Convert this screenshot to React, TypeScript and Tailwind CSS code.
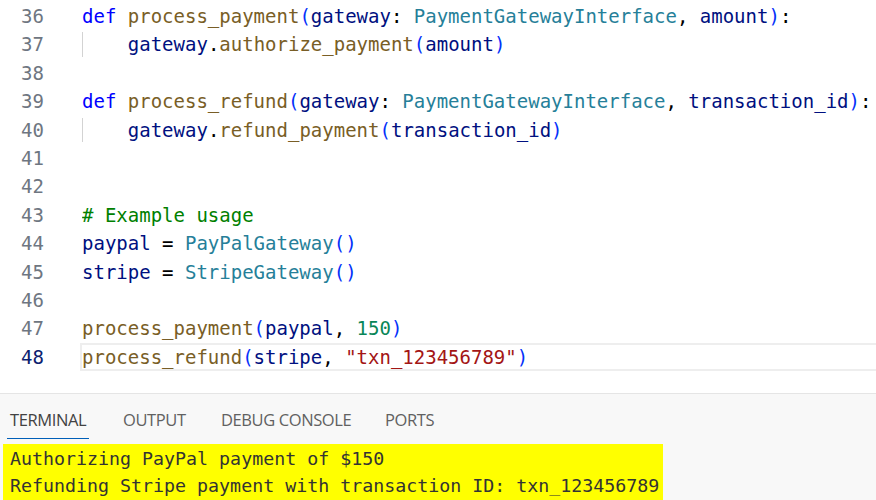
import React from "react";

type Tok = [string, string];

const KW = "text-[#0000ff]";
const FN = "text-[#795e26]";
const VAR = "text-[#001080]";
const TYPE = "text-[#267f99]";
const PAREN = "text-[#0431fa]";
const PLAIN = "text-[#000000]";
const CMT = "text-[#008000]";
const NUM = "text-[#098658]";
const STR = "text-[#a31515]";

// each line: number, indent?, tokens
const lines: { n: number; indent?: boolean; toks: Tok[] }[] = [
  {
    n: 36,
    toks: [
      ["def", KW],
      [" ", PLAIN],
      ["process_payment", FN],
      ["(", PAREN],
      ["gateway", VAR],
      [": ", PLAIN],
      ["PaymentGatewayInterface", TYPE],
      [", ", PLAIN],
      ["amount", VAR],
      [")", PAREN],
      [":", PLAIN],
    ],
  },
  {
    n: 37,
    indent: true,
    toks: [
      ["gateway", VAR],
      [".", PLAIN],
      ["authorize_payment", FN],
      ["(", PAREN],
      ["amount", VAR],
      [")", PAREN],
    ],
  },
  { n: 38, toks: [] },
  {
    n: 39,
    toks: [
      ["def", KW],
      [" ", PLAIN],
      ["process_refund", FN],
      ["(", PAREN],
      ["gateway", VAR],
      [": ", PLAIN],
      ["PaymentGatewayInterface", TYPE],
      [", ", PLAIN],
      ["transaction_id", VAR],
      [")", PAREN],
      [":", PLAIN],
    ],
  },
  {
    n: 40,
    indent: true,
    toks: [
      ["gateway", VAR],
      [".", PLAIN],
      ["refund_payment", FN],
      ["(", PAREN],
      ["transaction_id", VAR],
      [")", PAREN],
    ],
  },
  { n: 41, toks: [] },
  { n: 42, toks: [] },
  { n: 43, toks: [["# Example usage", CMT]] },
  {
    n: 44,
    toks: [
      ["paypal", VAR],
      [" = ", PLAIN],
      ["PayPalGateway", TYPE],
      ["()", PAREN],
    ],
  },
  {
    n: 45,
    toks: [
      ["stripe", VAR],
      [" = ", PLAIN],
      ["StripeGateway", TYPE],
      ["()", PAREN],
    ],
  },
  { n: 46, toks: [] },
  {
    n: 47,
    toks: [
      ["process_payment", FN],
      ["(", PAREN],
      ["paypal", VAR],
      [", ", PLAIN],
      ["150", NUM],
      [")", PAREN],
    ],
  },
  {
    n: 48,
    toks: [
      ["process_refund", FN],
      ["(", PAREN],
      ["stripe", VAR],
      [", ", PLAIN],
      ['"txn_123456789"', STR],
      [")", PAREN],
    ],
  },
];

const CURRENT = 48;

const App = () => {
  return (
    <div className="w-[876px] h-[500px] bg-white overflow-hidden flex flex-col">
      {/* Editor */}
      <div
        className="h-[393px] pt-[2px] text-[19px] whitespace-pre overflow-hidden"
        style={{ fontFamily: '"DejaVu Sans Mono", monospace' }}
      >
        {lines.map((l) => (
          <div key={l.n} className="flex h-[28.4px]">
            <div
              className={`w-[44px] shrink-0 text-right leading-[28.4px] ${
                l.n === CURRENT ? "text-[#0b216f]" : "text-[#6e7681]"
              }`}
            >
              {l.n}
            </div>
            <div
              className={`ml-[36px] flex-1 flex overflow-hidden border-2 border-r-0 ${
                l.n === CURRENT ? "border-[#eeeeee]" : "border-transparent"
              }`}
            >
              {l.indent && (
                <span className="w-[45.8px] shrink-0 border-l border-[#d3d3d3] -mt-[2px] -mb-[2px]" />
              )}
              <span className="leading-[24.4px]">
                {l.toks.map(([t, c], i) => (
                  <span key={i} className={c}>
                    {t}
                  </span>
                ))}
              </span>
            </div>
          </div>
        ))}
      </div>

      {/* Panel */}
      <div className="flex-1 border-t border-[#e5e5e5] bg-[#f8f8f8] flex flex-col">
        <div
          className="h-[50px] flex items-start pl-[7px] text-[16.5px] tracking-[-0.4px]"
          style={{ fontFamily: '"Open Sans", "Noto Sans", sans-serif' }}
        >
          <div className="w-[116px] pt-[14px]">
            <div className="inline-block px-[3px] pb-[5px] border-b border-[#005fb8] text-[#424242]">
              TERMINAL
            </div>
          </div>
          <div className="w-[98px] pt-[14px] text-[#616161]">OUTPUT</div>
          <div className="w-[164px] pt-[14px] text-[#616161]">DEBUG CONSOLE</div>
          <div className="pt-[14px] text-[#616161]">PORTS</div>
        </div>
        <div
          className="ml-[3px] w-[660px] flex-1 bg-[#ffff00] pl-[7px] pt-[1px] text-[18.3px] leading-[27px] text-[#333333] whitespace-pre"
          style={{ fontFamily: '"DejaVu Sans Mono", monospace' }}
        >
          <div>Authorizing PayPal payment of $150</div>
          <div>Refunding Stripe payment with transaction ID: txn_123456789</div>
        </div>
      </div>
    </div>
  );
};

export default App;
